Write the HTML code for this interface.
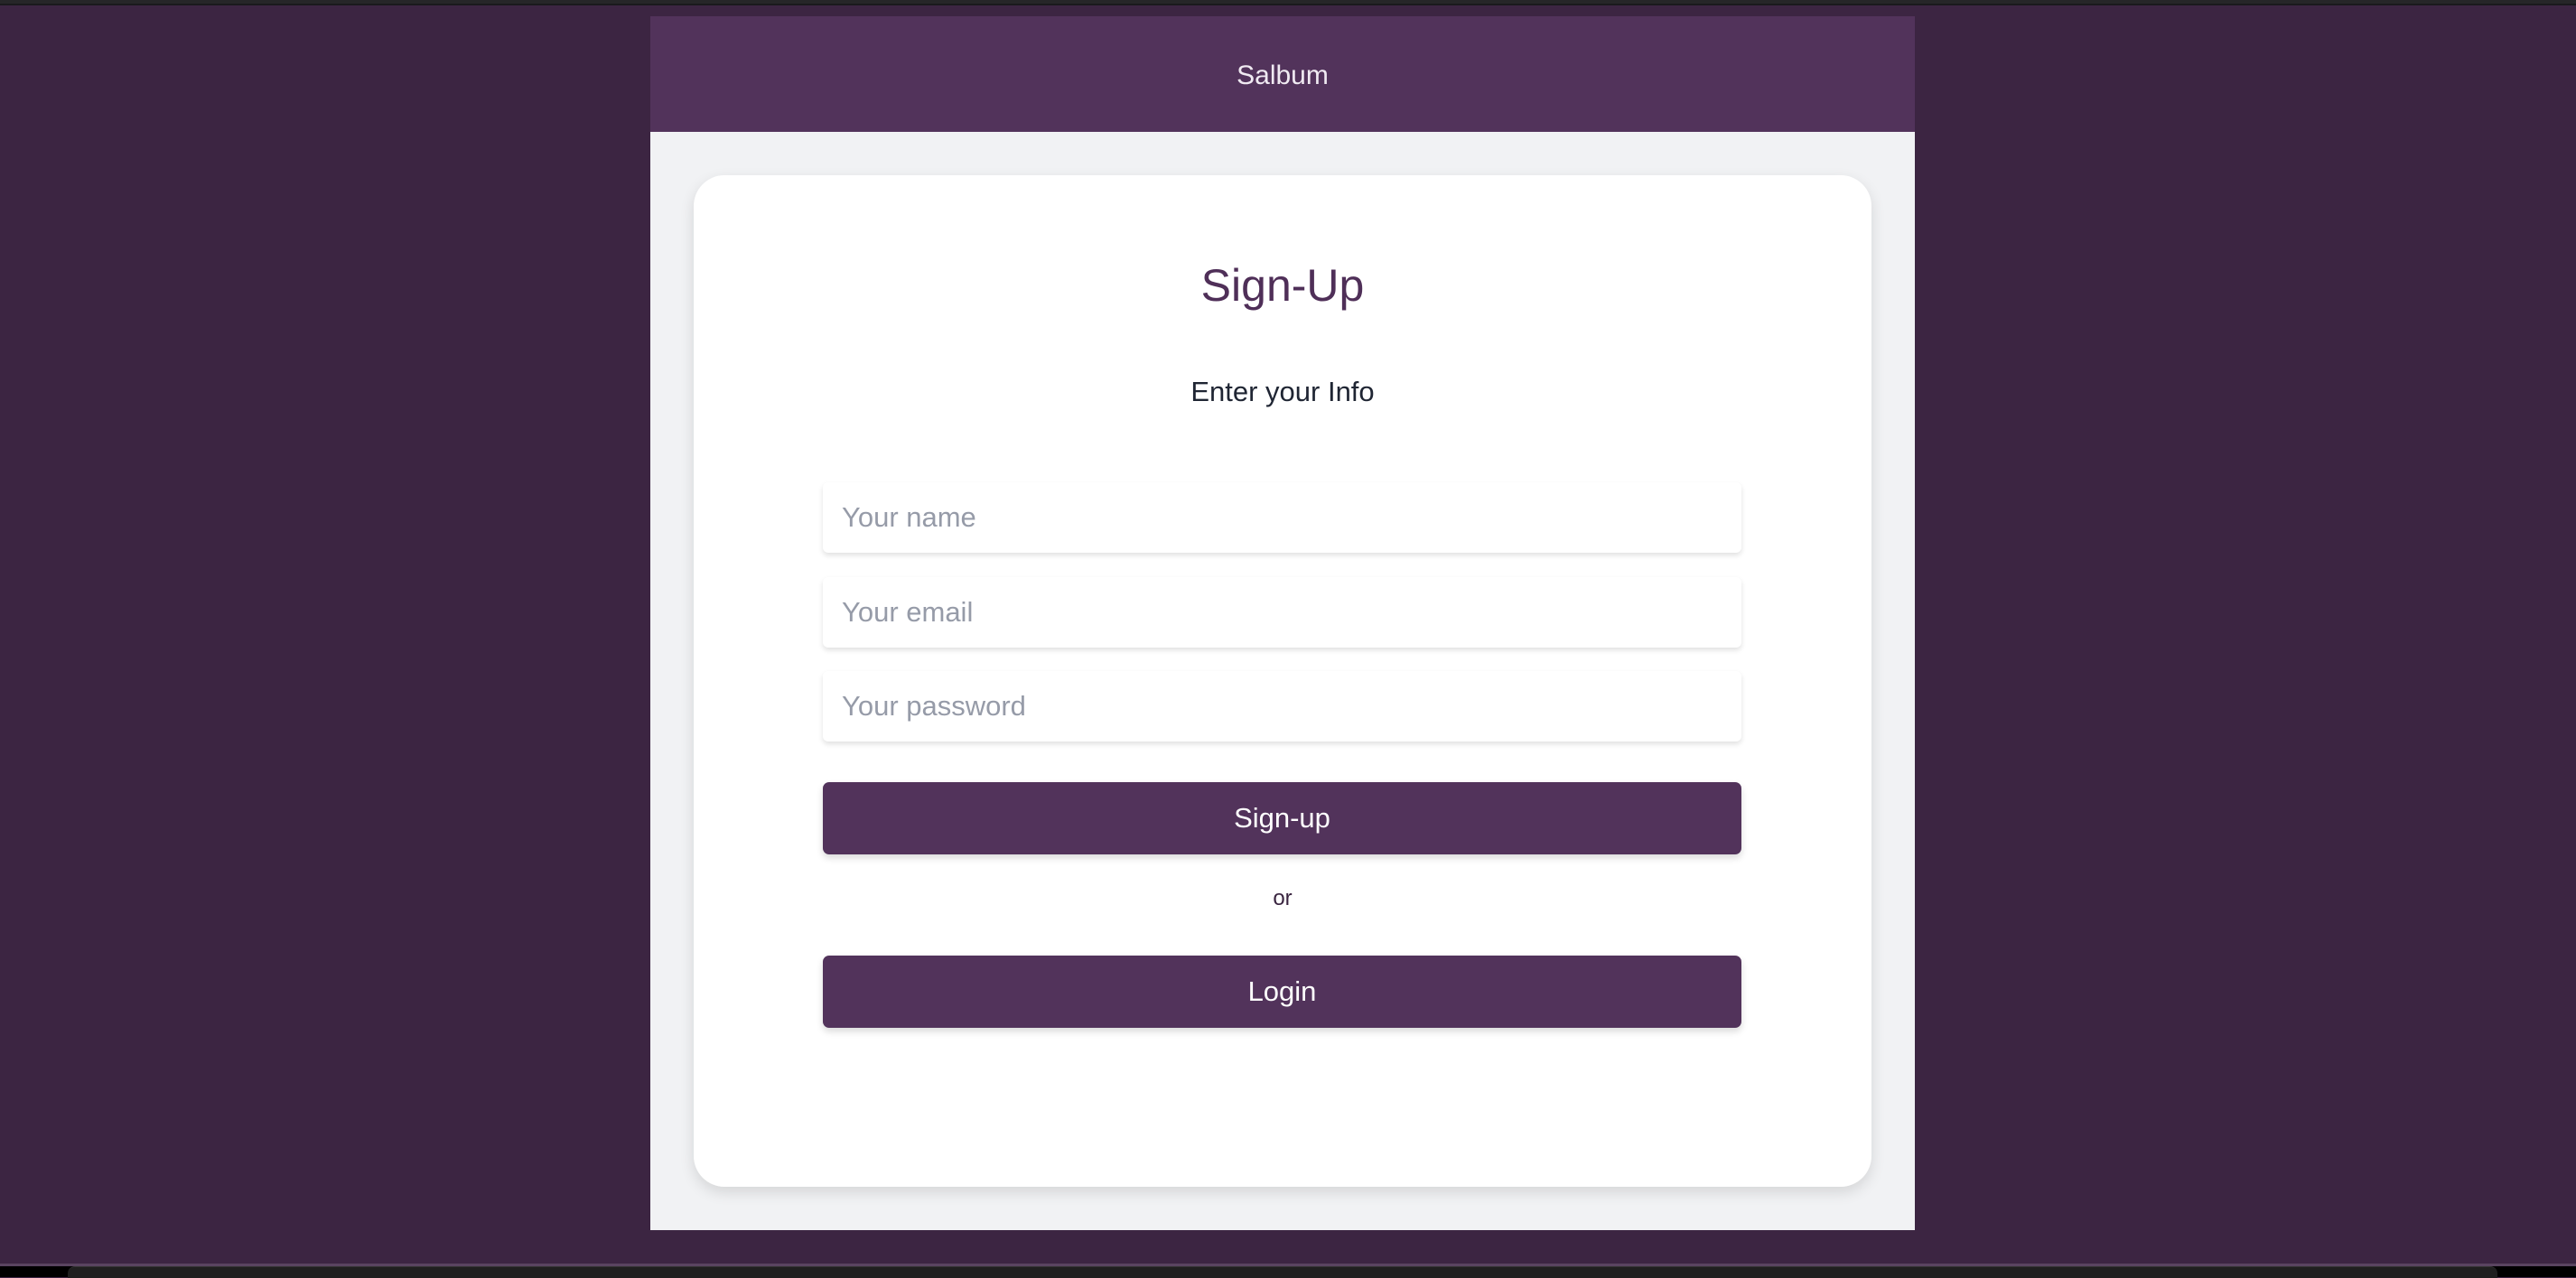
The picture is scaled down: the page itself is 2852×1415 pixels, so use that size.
<!DOCTYPE html>
<html><head><meta charset="utf-8"><style>
html,body{margin:0;padding:0;}
body{width:2852px;height:1414px;background:#3c2542;position:relative;overflow:hidden;font-family:"Liberation Sans",sans-serif;}
.topbar{position:absolute;left:0;top:0;width:2852px;height:4px;background:#262628;}
.topline{position:absolute;left:0;top:4px;width:2852px;height:2px;background:#1a1a1c;}
.botline{position:absolute;left:0;top:1399px;width:2852px;height:3px;background:#5a4460;}
.botbar{position:absolute;left:0;top:1402px;width:2852px;height:12px;background:#000;}
.botbar2{position:absolute;left:75px;top:1402px;width:2690px;height:12px;background:#1f1f1f;border-radius:8px 8px 0 0;border-top:1px solid #333;}
.panel{position:absolute;left:720px;top:18px;width:1400px;height:1344px;background:#f1f2f4;}
.header{position:absolute;left:0;top:0;width:1400px;height:128px;background:#52335b;color:#f0eaf2;font-size:30px;text-align:center;line-height:132px;}
.card{position:absolute;left:48px;top:176px;width:1304px;height:1120px;background:#fff;border-radius:34px;box-shadow:0 6px 16px rgba(0,0,0,0.12);}
.title{position:absolute;left:0;width:100%;top:92px;text-align:center;font-size:50px;color:#4f2f58;line-height:60px;font-weight:normal;}
.sub{position:absolute;left:0;width:100%;top:220px;text-align:center;font-size:31px;color:#1f2533;line-height:40px;}
.inp{position:absolute;left:143px;width:1017px;height:78px;background:#fff;border-radius:6px;box-shadow:0 3px 6px rgba(0,0,0,0.12);font-size:31px;color:#969ba8;line-height:78px;box-sizing:border-box;padding-left:21px;}
.btn{position:absolute;left:143px;width:1017px;height:80px;background:#52335b;border-radius:7px;box-shadow:0 4px 8px rgba(0,0,0,0.15);color:#fff;font-size:31px;text-align:center;line-height:80px;}
.or{position:absolute;left:0;width:100%;top:786px;text-align:center;font-size:24px;color:#3a2540;line-height:30px;}
</style></head><body>
<div class="topbar"></div><div class="topline"></div>
<div class="panel">
  <div class="header">Salbum</div>
  <div class="card">
    <div class="title">Sign-Up</div>
    <div class="sub">Enter your Info</div>
    <div class="inp" style="top:340px">Your name</div>
    <div class="inp" style="top:445px">Your email</div>
    <div class="inp" style="top:549px">Your password</div>
    <div class="btn" style="top:672px">Sign-up</div>
    <div class="or">or</div>
    <div class="btn" style="top:864px">Login</div>
  </div>
</div>
<div class="botline"></div><div class="botbar"></div><div class="botbar2"></div>
</body></html>
